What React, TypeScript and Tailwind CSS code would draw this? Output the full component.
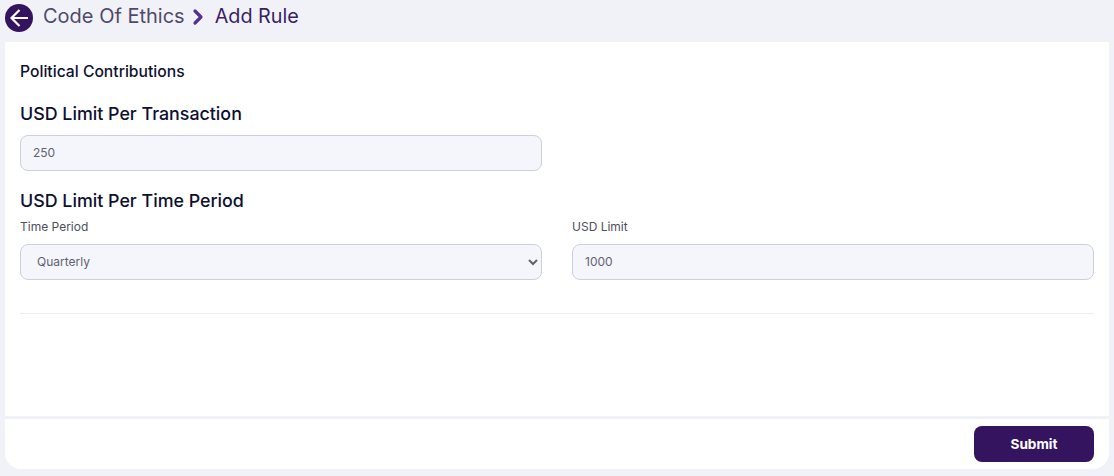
import { ChevronRight } from "lucide-react";

const fieldClass =
  "h-9 w-full rounded-lg border border-[#ccd0dd] bg-[#f5f6fc] text-xs text-[#5f6270] outline-none";

export default function App() {
  return (
    <div className="h-[476px] w-[1114px] overflow-hidden bg-[#f1f2f8] font-['Inter',sans-serif]">
      <div className="flex h-[42px] items-start pl-[5px] pt-[4px]">
        <div className="flex h-7 w-7 items-center justify-center rounded-full bg-[#34145f]">
          <svg viewBox="0 0 24 24" className="h-6 w-6 text-white" fill="none" stroke="currentColor" strokeWidth="2.2">
            <path d="M21 12H5M12.5 4L4.5 12l8 8" />
          </svg>
        </div>
        <span className="ml-[10px] text-xl leading-6 text-[#4f4a6b]">Code Of Ethics</span>
        <ChevronRight className="ml-[1px] mt-[1px] h-[24px] w-[24px] text-[#55308f]" strokeWidth={3.2} />
        <span className="ml-[5px] text-[19.8px] leading-6 text-[#3a1f63]">Add Rule</span>
      </div>

      <div className="mx-[5px] flex h-[427px] flex-col rounded-b-2xl bg-white">
        <div className="flex h-[374px] flex-col px-[15px] pt-[20px]">
          <h2 className="text-[15.7px] leading-[20px] font-medium text-[#0e1030]">Political Contributions</h2>
          <h3 className="mt-[20px] text-[17.84px] leading-6 font-medium text-[#0e1030]">USD Limit Per Transaction</h3>
          <div className="mt-[9px] w-[522px]">
            <input readOnly value="250" className={`${fieldClass} px-3 pb-[2px]`} />
          </div>
          <h3 className="mt-[18px] text-[17.84px] leading-6 font-medium text-[#0e1030]">USD Limit Per Time Period</h3>
          <div className="mt-[5px] grid grid-cols-[522px_522px] gap-x-[30px]">
            <div>
              <label className="block text-xs leading-[18px] text-[#4c4f5c]">Time Period</label>
              <select defaultValue="quarterly" className={`${fieldClass} mt-[8px] pb-[2px] pl-3`}>
                <option value="monthly">Monthly</option>
                <option value="quarterly">Quarterly</option>
                <option value="yearly">Yearly</option>
              </select>
            </div>
            <div>
              <label className="block text-xs leading-[18px] text-[#4c4f5c]">USD Limit</label>
              <input readOnly value="1000" className={`${fieldClass} mt-[8px] px-3 pb-[2px]`} />
            </div>
          </div>
          <div className="mt-[33px] h-px w-full bg-[#eceef4]" />
        </div>
        <div className="h-[3px] bg-[#f1f2f8]" />
        <div className="flex flex-1 items-start justify-end pr-[15px] pt-[7px]">
          <button className="h-9 w-[120px] rounded-lg bg-[#34145f] text-[13.6px] font-bold text-white">Submit</button>
        </div>
      </div>
    </div>
  );
}
